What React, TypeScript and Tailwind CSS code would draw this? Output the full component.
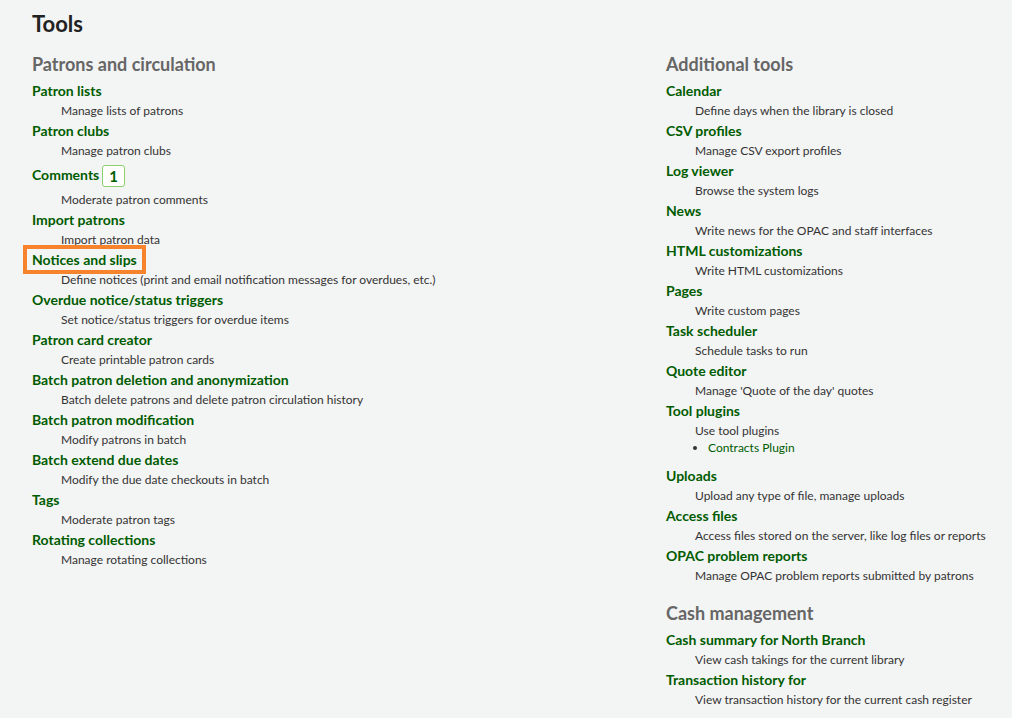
import React from "react"

type Item = {
  title: string
  desc: string
  badge?: string
  plugins?: string[]
  highlight?: boolean
}

const patrons: Item[] = [
  { title: "Patron lists", desc: "Manage lists of patrons" },
  { title: "Patron clubs", desc: "Manage patron clubs" },
  { title: "Comments", desc: "Moderate patron comments", badge: "1" },
  { title: "Import patrons", desc: "Import patron data" },
  { title: "Notices and slips", desc: "Define notices (print and email notification messages for overdues, etc.)", highlight: true },
  { title: "Overdue notice/status triggers", desc: "Set notice/status triggers for overdue items" },
  { title: "Patron card creator", desc: "Create printable patron cards" },
  { title: "Batch patron deletion and anonymization", desc: "Batch delete patrons and delete patron circulation history" },
  { title: "Batch patron modification", desc: "Modify patrons in batch" },
  { title: "Batch extend due dates", desc: "Modify the due date checkouts in batch" },
  { title: "Tags", desc: "Moderate patron tags" },
  { title: "Rotating collections", desc: "Manage rotating collections" },
]

const additional: Item[] = [
  { title: "Calendar", desc: "Define days when the library is closed" },
  { title: "CSV profiles", desc: "Manage CSV export profiles" },
  { title: "Log viewer", desc: "Browse the system logs" },
  { title: "News", desc: "Write news for the OPAC and staff interfaces" },
  { title: "HTML customizations", desc: "Write HTML customizations" },
  { title: "Pages", desc: "Write custom pages" },
  { title: "Task scheduler", desc: "Schedule tasks to run" },
  { title: "Quote editor", desc: "Manage 'Quote of the day' quotes" },
  { title: "Tool plugins", desc: "Use tool plugins", plugins: ["Contracts Plugin"] },
  { title: "Uploads", desc: "Upload any type of file, manage uploads" },
  { title: "Access files", desc: "Access files stored on the server, like log files or reports" },
  { title: "OPAC problem reports", desc: "Manage OPAC problem reports submitted by patrons" },
]

const cash: Item[] = [
  { title: "Cash summary for North Branch", desc: "View cash takings for the current library" },
  { title: "Transaction history for", desc: "View transaction history for the current cash register" },
]

function ToolItem({ item }: { item: Item }) {
  return (
    <>
      <dt className={"text-[14px] font-bold text-[#005c00] " + (item.badge ? "leading-[30px]" : "leading-[21px]")}>
        {item.highlight ? (
          <span className="-my-[4px] -ml-[9px] inline-block border-[4px] border-[#f7842d] px-[5px] py-[1px] leading-[19px]">
            <a>{item.title}</a>
          </span>
        ) : (
          <a>{item.title}</a>
        )}
        {item.badge && (
          <span className="ml-[3px] inline-block h-[22px] rounded-[3px] border border-[#8fcf6c] bg-white px-[6px] align-middle text-[15px] leading-[20px]">
            {item.badge}
          </span>
        )}
      </dt>
      <dd className="pl-[29px] text-[12px] leading-[19px] text-[#333]">
        {item.desc}
        {item.plugins && (
          <ul className="mb-[9px] list-disc pl-[13px] leading-[16px]">
            {item.plugins.map((p) => (
              <li key={p} className="text-[#005c00] marker:text-[#333]">
                {p}
              </li>
            ))}
          </ul>
        )}
      </dd>
    </>
  )
}

function Section({ heading, items, className = "" }: { heading: string; items: Item[]; className?: string }) {
  return (
    <div className={className}>
      <h3 className="mb-[3px] text-[18px] font-bold leading-[26px] text-[#666]">{heading}</h3>
      <dl>
        {items.map((it) => (
          <ToolItem key={it.title} item={it} />
        ))}
      </dl>
    </div>
  )
}

export default function App() {
  return (
    <div
      className="min-h-[718px] bg-[#f3f4f4] pl-[32px] pt-[9px]"
      style={{ fontFamily: "Lato, 'Open Sans', sans-serif" }}
    >
      <h1 className="text-[22px] font-bold leading-[30px] text-[#222]">Tools</h1>
      <div className="mt-[12px] grid grid-cols-[634px_1fr]">
        <Section heading="Patrons and circulation" items={patrons} />
        <div>
          <Section heading="Additional tools" items={additional} />
          <Section heading="Cash management" items={cash} className="mt-[15px]" />
        </div>
      </div>
    </div>
  )
}
